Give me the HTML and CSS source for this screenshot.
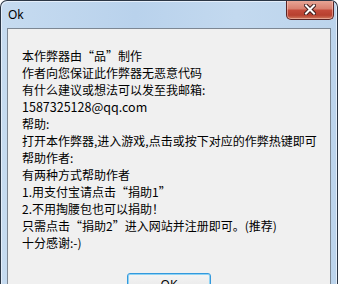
FILE: index.html
```
<!DOCTYPE html>
<html lang="zh-CN">

<head>
    <meta charset="UTF-8">
    <meta name="viewport" content="width=device-width, initial-scale=1.0">
    <title>Ok</title>
    <link rel="stylesheet" href="styles.css">
</head>

<body>

    <div class="window">
        <div class="titlebar">
            <span class="title">Ok</span>
            <button class="close" title="关闭">
                <svg width="12" height="11" viewBox="0 0 12 11">
                    <path d="M2 1.5 L10 9.5 M10 1.5 L2 9.5" stroke="#3d1a1a" stroke-width="4" stroke-linecap="square" />
                    <path d="M2 1.5 L10 9.5 M10 1.5 L2 9.5" stroke="#ffffff" stroke-width="2" stroke-linecap="square" />
                </svg>
            </button>
        </div>

        <div class="client">
            <div class="message">
                <p>本作弊器由“品”制作</p>
                <p>作者向您保证此作弊器无恶意代码</p>
                <p>有什么建议或想法可以发至我邮箱:</p>
                <p class="mail">1587325128@qq.com</p>
                <p>帮助:</p>
                <p>打开本作弊器,进入游戏,点击或按下对应的作弊热键即可</p>
                <p>帮助作者:</p>
                <p>有两种方式帮助作者</p>
                <p>1.用支付宝请点击“捐助1”</p>
                <p>2.不用掏腰包也可以捐助！</p>
                <p>只需点击“捐助2”进入网站并注册即可。(推荐)</p>
                <p>十分感谢:-)</p>
            </div>
            <div class="actions">
                <button class="ok">OK</button>
            </div>
        </div>
    </div>

</body>

</html>
```

FILE: styles.css
```
body {
    margin: 0;
    padding: 0;
    background-color: #ffffff;
    font-family: "Noto Sans CJK SC", "Noto Sans", sans-serif;
    font-size: 12px;
    color: #000000;
}

.window {
    width: 338px;
    height: 284px;
    box-sizing: border-box;
    border: 1px solid #2b3645;
    border-bottom: none;
    border-radius: 7px 7px 0 0;
    padding: 0 6px;
    background: linear-gradient(90deg, #c6dbf0 0%, #b9d2ec 40%, #c3d9ef 70%, #bcd4ec 100%);
    box-shadow: inset 1px 1px 0 #e4eefa, inset -1px 0 0 #e4eefa;
    overflow: hidden;
}

.titlebar {
    display: flex;
    justify-content: space-between;
    align-items: flex-start;
    height: 27px;
    margin: 0 -6px;
    padding: 0 3px 0 7px;
}

.title {
    font-family: "Noto Sans", sans-serif;
    font-size: 12px;
    line-height: 12px;
    margin-top: 8px;
    color: #000000;
}

.close {
    display: flex;
    justify-content: center;
    align-items: center;
    width: 48px;
    height: 20px;
    margin-top: -1px;
    padding: 0;
    border: 1px solid #5a2424;
    border-top: none;
    border-radius: 0 0 5px 5px;
    background: linear-gradient(180deg, #e9a99a 0%, #d98170 45%, #c34a3a 55%, #b7402f 80%, #d07a5e 100%);
    box-shadow: inset 0 0 0 1px rgba(255, 210, 200, 0.5);
}

.client {
    height: 260px;
    border: 1px solid #7d8793;
    border-bottom: none;
    background-color: #f0f0f0;
    padding: 18px 0 0 14px;
    box-sizing: border-box;
}

.message p {
    margin: 0;
    line-height: 17px;
    white-space: nowrap;
}

.message .mail {
    font-size: 12.5px;
}

.actions {
    display: flex;
    justify-content: center;
    margin-top: 22px;
    margin-left: -14px;
}

.ok {
    width: 84px;
    height: 23px;
    padding: 0;
    border: 1px solid #3399dd;
    border-radius: 3px;
    background: linear-gradient(180deg, #f4f4f4 0%, #ececec 50%, #dfdfdf 51%, #d3d3d3 100%);
    box-shadow: inset 0 0 0 1px #8fd3f4;
    font-family: "Noto Sans", sans-serif;
    font-size: 12px;
    color: #000000;
}
```
